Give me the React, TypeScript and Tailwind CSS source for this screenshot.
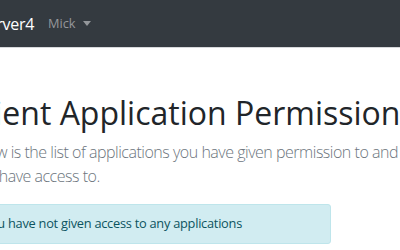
export default function App() {
  return (
    <div className="w-[400px] h-[250px] overflow-hidden bg-white font-['Open_Sans','Noto_Sans',sans-serif] text-[#212529]">
      {/* top nav */}
      <nav className="h-[48px] bg-[#343a40] border-b border-[#d6d8db] flex items-center">
        <div className="w-[34px] shrink-0 flex justify-end">
          <span className="whitespace-nowrap text-white text-[16px] leading-none tracking-[-0.02em]">IdentityServer4</span>
        </div>
        <div className="ml-[14px] flex items-center gap-[7px] text-[12.8px] text-[#94979b]">
          <span>Mick</span>
          <span className="w-0 h-0 border-l-[4px] border-r-[4px] border-t-[5px] border-l-transparent border-r-transparent border-t-[#94979b]" />
        </div>
      </nav>

      <div className="-ml-[34px] w-[640px]">
        <div className="pt-[46px]">
          <h1 className="text-[32px] leading-[1.2] font-medium tracking-[0em] mb-[8px] whitespace-nowrap">Client Application Permissions</h1>
          <p className="text-[16px] leading-[24px] text-[#6c757d] font-light tracking-[-0.03em] w-[555px]">
            Below is the list of applications you have given permission to and the resources they have access to.
          </p>
        </div>
        <div className="mt-[16px] w-[365px] bg-[#d1ecf1] border border-[#bee5eb] text-[#0c5460] rounded-[3px] px-[16px] py-[9px] text-[12.8px] leading-[1.5] tracking-[-0.02em]">
          You have not given access to any applications
        </div>
      </div>
    </div>
  )
}
